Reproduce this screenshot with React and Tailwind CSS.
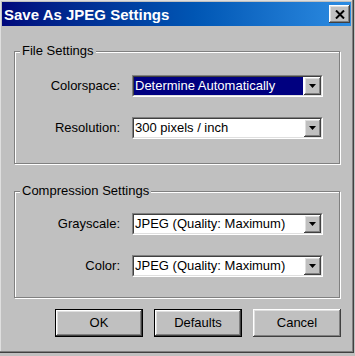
import React from 'react'

const raised =
  'bg-[#c0c0c0] shadow-[inset_-1px_-1px_0_#404040,inset_1px_1px_0_#ffffff,inset_-2px_-2px_0_#808080,inset_2px_2px_0_#dfdfdf]'

function Arrow() {
  return (
    <svg width="7" height="4" viewBox="0 0 7 4">
      <polygon points="0,0 7,0 3.5,4" fill="#000" />
    </svg>
  )
}

function Select({ value, focused }) {
  return (
    <div className="w-[191px] h-[22px] border border-t-[#808080] border-l-[#808080] border-b-white border-r-white">
      <div className="h-full flex border border-t-[#404040] border-l-[#404040] border-b-[#dfdfdf] border-r-[#dfdfdf] bg-white">
        <div className="flex-1 flex items-center min-w-0 pr-[1px]">
          <span
            className={
              'w-full h-full pl-[1px] leading-[18px] whitespace-nowrap ' +
              (focused ? 'bg-[#000080] text-white' : 'text-black')
            }
          >
            {value}
          </span>
        </div>
        <div className={'w-[17px] h-full flex items-center justify-center ' + raised}>
          <Arrow />
        </div>
      </div>
    </div>
  )
}

function Row({ label, value, focused }) {
  return (
    <div className="flex items-center">
      <div className="w-[105px] text-right text-black">{label}</div>
      <div className="ml-[12px]">
        <Select value={value} focused={focused} />
      </div>
    </div>
  )
}

function Group({ title, children, className }) {
  return (
    <fieldset
      className={
        'w-[326px] ml-[14px] px-0 border border-[#808080] shadow-[1px_1px_0_#ffffff,inset_1px_1px_0_#ffffff] ' +
        className
      }
    >
      <legend className="ml-[5px] px-[2px] leading-[16px] bg-[#c0c0c0] text-black">{title}</legend>
      <div className="flex flex-col gap-[20px]">{children}</div>
    </fieldset>
  )
}

function Button({ children, isDefault }) {
  if (isDefault) {
    return (
      <div className="w-[88px] h-[28px] border border-black">
        <div className={'w-full h-full flex items-center justify-center text-black ' + raised}>{children}</div>
      </div>
    )
  }
  return (
    <div className={'w-[88px] h-[28px] flex items-center justify-center text-black ' + raised}>{children}</div>
  )
}

export default function App() {
  return (
    <div className="w-[355px] h-[356px] bg-[#c0c0c0] font-['Liberation_Sans',Arial,sans-serif] text-[13px]">
      <div className="w-[354px] h-[353px] border-r border-b border-[#404040] shadow-[inset_-1px_-1px_0_#808080,inset_1px_1px_0_#dfdfdf] bg-[#c0c0c0] flex flex-col pt-[2px]">
        <div className="mx-[2px] h-[24px] flex items-center justify-between bg-gradient-to-r from-[#00077c] to-[#2c8ce2] pl-[2px] pr-[1px]">
          <span className="text-white font-bold text-[15px] leading-none">Save As JPEG Settings</span>
          <div className={'w-[21px] h-[18px] flex items-center justify-center ' + raised}>
            <svg width="10" height="9" viewBox="0 0 10 9">
              <path d="M1 0.5 L9 8.5 M9 0.5 L1 8.5" stroke="#000" strokeWidth="2" />
            </svg>
          </div>
        </div>

        <Group title="File Settings" className="mt-[17px] pt-[16px] pb-[24px]">
          <Row label="Colorspace:" value="Determine Automatically" focused />
          <Row label="Resolution:" value="300 pixels / inch" />
        </Group>

        <Group title="Compression Settings" className="mt-[19px] pt-[14px] pb-[20px]">
          <Row label="Grayscale:" value="JPEG (Quality: Maximum)" />
          <Row label="Color:" value="JPEG (Quality: Maximum)" />
        </Group>

        <div className="mt-[11px] flex justify-end gap-[11px] pr-[12px]">
          <Button isDefault>OK</Button>
          <Button isDefault>Defaults</Button>
          <Button>Cancel</Button>
        </div>
      </div>
    </div>
  )
}
